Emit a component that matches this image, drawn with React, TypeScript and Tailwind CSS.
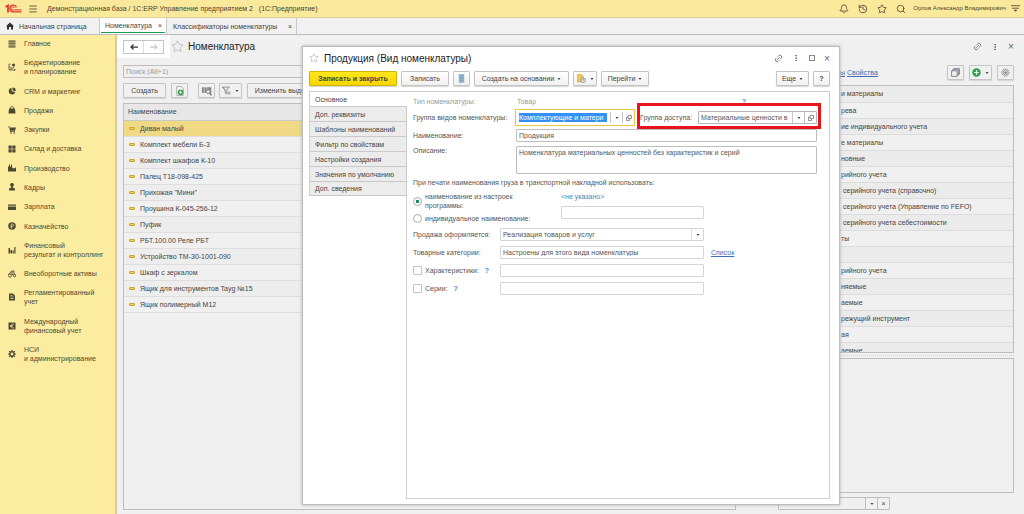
import type { ComponentProps, ReactNode } from "react";
import { clsx } from "clsx";
import { Bell, History, Link2, Menu, MoreVertical, Search, Star } from "lucide-react";

type SectionIcon =
  | "main" | "budget" | "crm" | "sales" | "purchase" | "stock" | "factory" | "staff"
  | "salary" | "treasury" | "result" | "assets" | "regulated" | "ifrs" | "admin";

const sections: { icon: SectionIcon; lines: string[] }[] = [
  { icon: "main", lines: ["Главное"] },
  { icon: "budget", lines: ["Бюджетирование", "и планирование"] },
  { icon: "crm", lines: ["CRM и маркетинг"] },
  { icon: "sales", lines: ["Продажи"] },
  { icon: "purchase", lines: ["Закупки"] },
  { icon: "stock", lines: ["Склад и доставка"] },
  { icon: "factory", lines: ["Производство"] },
  { icon: "staff", lines: ["Кадры"] },
  { icon: "salary", lines: ["Зарплата"] },
  { icon: "treasury", lines: ["Казначейство"] },
  { icon: "result", lines: ["Финансовый", "результат и контроллинг"] },
  { icon: "assets", lines: ["Внеоборотные активы"] },
  { icon: "regulated", lines: ["Регламентированный", "учет"] },
  { icon: "ifrs", lines: ["Международный", "финансовый учет"] },
  { icon: "admin", lines: ["НСИ", "и администрирование"] },
];

const items = [
  "Диван малый",
  "Комплект мебели Б-3",
  "Комплект шкафов К-10",
  "Палец Т18-098-425",
  'Прихожая "Мини"',
  "Проушина К-045-256-12",
  "Пуфик",
  "РБТ.100.00 Реле РБТ",
  "Устройство ТМ-30-1001-090",
  "Шкаф с зеркалом",
  "Ящик для инструментов Tayg №15",
  "Ящик полимерный М12",
];

const kinds = [
  "и материалы",
  "рева",
  "ие индивидуального учета",
  "е материалы",
  "новные",
  "рийного учета",
  "серийного учета (справочно)",
  "серийного учета (Управление по FEFO)",
  "серийного учета себестоимости",
  "ты",
  "",
  "рийного учета",
  "няемые",
  "аемые",
  "режущий инструмент",
  "ая",
  "аемые",
];

const dialogTabs = [
  "Основное",
  "Доп. реквизиты",
  "Шаблоны наименований",
  "Фильтр по свойствам",
  "Настройки создания",
  "Значения по умолчанию",
  "Доп. сведения",
];

const sectionShapes: Record<SectionIcon, ReactNode> = {
  main: <path d="M1 1h14v2.4H1zM1 4.9h14v2.4H1zM1 8.8h14v2.4H1zM1 12.7h14v2.4H1z" />,
  budget: (
    <>
      <path d="M2 2v12h12M2 2h3M2 8h3l3 3 5-3" fill="none" stroke="currentColor" strokeWidth="1.5" />
      <circle cx="11" cy="4" r="3.2" />
      <circle cx="6" cy="12" r="1.6" />
      <circle cx="13.5" cy="13.5" r="1.6" />
    </>
  ),
  crm: <path d="M7 2a6.6 6.6 0 1 0 7.5 8L7.5 8.6zM9 1v6.2l6.4 1.2A6.8 6.8 0 0 0 9 1z" />,
  sales: (
    <>
      <path d="M2 5h12l1 10H1z" />
      <path d="M5 7V4a3 3 0 0 1 6 0v3" fill="none" stroke="currentColor" strokeWidth="1.4" />
    </>
  ),
  purchase: (
    <>
      <path d="M0 1h3.2l.8 2h12l-2 6.5H5.6l.3 1.2H14V12H4.6L2.4 2.6H0z" />
      <circle cx="6" cy="14" r="1.6" />
      <circle cx="12.5" cy="14" r="1.6" />
    </>
  ),
  stock: <path d="M1 1h6.4v6.4H1zM8.6 1H15v6.4H8.6zM1 8.6h6.4V15H1zM8.6 8.6H15V15H8.6z" />,
  factory: <path d="M0 15V5h2V1h2v4h2V1h2v6l4 2 3-2h1v8z" />,
  staff: <path d="M8 0a3.6 3.6 0 0 1 2.2 6.5L9.5 9 14 11v4H2v-4l4.5-2-.7-2.5A3.6 3.6 0 0 1 8 0z" />,
  salary: <path d="M0 3h16v2.5H0zM0 7h16v7H0z" />,
  treasury: (
    <>
      <circle cx="8" cy="8" r="7.5" />
      <path d="M6.5 13V4h2.3a2.3 2.3 0 0 1 0 4.6H5M5 10.6h4" fill="none" stroke="#fbeb9e" strokeWidth="1.3" />
    </>
  ),
  result: <path d="M1 4h3v11H1zM5 8h3v7H5zM9 9h2.5v6H9zM12.5 2h2.5v13h-2.5z" />,
  assets: (
    <g fill="none" stroke="currentColor" strokeWidth="1.8">
      <circle cx="4" cy="11" r="3" />
      <circle cx="13" cy="11.5" r="2.3" />
      <path d="M1 8l4-2 2-4h5v6l3 1M7 9h4M8 3v5" />
    </g>
  ),
  regulated: (
    <>
      <path d="M2 1h8l4 4v10H2z" />
      <path d="M5 5h4M5 8h6M5 11h6" stroke="#fbeb9e" strokeWidth="1.3" />
    </>
  ),
  ifrs: (
    <>
      <path d="M1 1h14v14H1z" />
      <path d="M12 4.5a4 4 0 1 0 0 7M4 7h6M4 9.2h5" fill="none" stroke="#fbeb9e" strokeWidth="1.3" />
    </>
  ),
  admin: (
    <>
      <circle cx="8" cy="8" r="4.3" fill="none" stroke="currentColor" strokeWidth="3" />
      <path
        d="M8 0v3M8 13v3M0 8h3M13 8h3M2.3 2.3l2 2M11.7 11.7l2 2M2.3 13.7l2-2M11.7 4.3l2-2"
        stroke="currentColor"
        strokeWidth="2.4"
      />
    </>
  ),
};

function Logo() {
  return (
    <svg viewBox="0 0 34 18" className="h-[9px] w-[17px]" fill="none" stroke="#dd3a2c">
      <path d="M1 6l5-3v14" strokeWidth="3.6" />
      <path d="M23 6.5a6.8 6.8 0 1 0-6.5 9.3H33" strokeWidth="2.6" />
      <path d="M19 8a3 3 0 1 0-2.5 3.8H33" strokeWidth="2" />
    </svg>
  );
}

function Caret() {
  return (
    <svg viewBox="0 0 6 4" className="h-[2px] w-[4px] shrink-0" fill="#444">
      <path d="M0 0h6L3 4z" />
    </svg>
  );
}

function OpenIcon() {
  return (
    <svg viewBox="0 0 12 12" className="size-[6px]" fill="none" stroke="#666" strokeWidth="1.4">
      <path d="M4 1h7v6H4zM4 4H1v7h6V8" />
    </svg>
  );
}

function Button({ className, children, ...props }: ComponentProps<"button">) {
  return (
    <button
      type="button"
      className={clsx(
        "flex h-[15px] shrink-0 items-center justify-center rounded-[1px] border border-[#c4c4c4] shadow-[0_1px_1px_#d4d4d4]",
        className,
      )}
      {...props}
    >
      {children}
    </button>
  );
}

function TopBar() {
  return (
    <header className="flex h-[18px] shrink-0 items-center border-b border-[#ddd09a] bg-[#fae89b] pl-[5px] pr-[4px] text-[#4a4631]">
      <Logo />
      <button type="button" aria-label="Меню" className="ml-[6px]">
        <Menu className="size-[10px]" strokeWidth={2} />
      </button>
      <span className="ml-[9px] whitespace-pre">
        {"Демонстрационная база / 1С:ERP Управление предприятием 2   (1С:Предприятие)"}
      </span>
      <div className="ml-auto flex items-center gap-[9px]">
        <button type="button" aria-label="Уведомления"><Bell className="size-[10px]" /></button>
        <button type="button" aria-label="История"><History className="size-[10px]" /></button>
        <button type="button" aria-label="Избранное"><Star className="size-[10px]" /></button>
        <button type="button" aria-label="Поиск"><Search className="size-[10px]" /></button>
        <span className="-ml-[2px] text-[6px]">Орлов Александр Владимирович</span>
        <button type="button" aria-label="Настройки" className="-ml-[4px]">
          <svg viewBox="0 0 16 16" className="size-[9px]" stroke="currentColor" strokeWidth="1.5">
            <path d="M0 3h16M2 7.5h12" />
            <path d="M6 11h4l-2 2z" fill="currentColor" />
          </svg>
        </button>
      </div>
    </header>
  );
}

function WindowTabs() {
  return (
    <nav className="flex h-[17px] shrink-0 border-b border-[#bcbcbc] bg-[#f1f1f1] text-[#444]">
      <button type="button" className="flex w-[100px] items-center gap-[5px] border-r border-[#c9c9c9] pl-[6px]">
        <svg viewBox="0 0 16 16" className="size-[8px]" fill="#333">
          <path d="M8 1l8 7.5h-2V15h-4v-5H6v5H2V8.5H0z" />
        </svg>
        Начальная страница
      </button>
      <button type="button" className="w-[67px] border-r border-[#c9c9c9] bg-white px-px pb-px">
        <span className="flex h-full items-center justify-between border-b border-[#1f9d57] pl-[4px] pr-[3px] pt-px">
          Номенклатура <span>×</span>
        </span>
      </button>
      <button type="button" className="flex w-[130px] items-center justify-between border-r border-[#c9c9c9] pl-[6px] pr-[4px]">
        Классификаторы номенклатуры <span>×</span>
      </button>
    </nav>
  );
}

function Sidebar() {
  return (
    <aside className="w-[117px] shrink-0 border-r-2 border-[#d8cc95] bg-[#fcec9f] pt-[4px] text-[#4d4a33]">
      <ul className="flex h-[324px] flex-col justify-between">
        {sections.map(({ icon, lines }) => (
          <li key={icon}>
            <a href="#" className="flex items-center pl-[8px] leading-[9px]">
              <svg viewBox="0 0 16 16" className="size-[8px] shrink-0" fill="currentColor">
                {sectionShapes[icon]}
              </svg>
              <span className="ml-[8px] whitespace-nowrap">
                {lines.map((line) => (
                  <span key={line} className="block">{line}</span>
                ))}
              </span>
            </a>
          </li>
        ))}
      </ul>
    </aside>
  );
}

function ItemList() {
  return (
    <section className="flex min-w-0 flex-1 flex-col">
      <input
        type="search"
        aria-label="Поиск"
        placeholder="Поиск (Alt+1)"
        className="h-[13px] rounded-[1px] border border-[#bdbdbd] px-[2px] placeholder:text-[#999]"
      />
      <div className="mt-[5px] flex">
        <Button className="w-[43px]">Создать</Button>
        <Button aria-label="Скопировать" className="ml-[5px] w-[17px]">
          <svg viewBox="0 0 16 16" className="size-[10px]" fill="none">
            <path d="M3 1h7l3 3v11H3z" fill="#fff" stroke="#777" />
            <circle cx="9" cy="10" r="4.5" fill="#2ba14b" />
            <path d="M9 7.5v5M6.5 10h5" stroke="#fff" strokeWidth="1.5" />
          </svg>
        </Button>
        <Button aria-label="Штрихкод" className="ml-[10px] w-[17px]">
          <svg viewBox="0 0 16 16" className="size-[10px]" fill="none" stroke="#555">
            <path d="M1 2v9M3 2v9M5.5 2v9M8 2v5M10 2v4M12 2v4M14 2v9" strokeWidth="1.3" />
            <circle cx="10" cy="9" r="3" />
            <path d="M12 11l3 4" strokeWidth="1.8" />
          </svg>
        </Button>
        <Button aria-label="Отбор" className="ml-[4px] w-[23px] gap-[4px]">
          <svg viewBox="0 0 16 16" className="size-[9px]" fill="none" stroke="#777" strokeWidth="1.4">
            <path d="M1 2h12L8.5 7v7l-3-2V7zM1 2l4.500 5M10 11h5M10 14h5" />
          </svg>
          <Caret />
        </Button>
        <Button className="ml-[5px] w-[90px]">Изменить выделенные</Button>
      </div>
      <div className="mt-[5px] flex-1 overflow-hidden border border-[#bdbdbd]">
        <table className="w-full border-collapse">
          <thead>
            <tr className="h-[16px] border-b border-[#c9c9c9] bg-[#e7e7e7]">
              <th className="p-0 pl-[4px] text-left font-normal">Наименование</th>
            </tr>
          </thead>
          <tbody>
            {items.map((name, i) => (
              <tr
                key={name}
                className={clsx("h-[16px] border-b border-[#dedede]", i === 0 ? "bg-[#efd985]" : i % 2 === 0 && "bg-[#ededed]")}
              >
                <td className="p-0 pl-[5px]">
                  <span className="flex items-center gap-[5px]">
                    <span className="h-[3px] w-[6px] rounded-[1px] border border-[#cfa52a] bg-[#eacb62]" />
                    {name}
                  </span>
                </td>
              </tr>
            ))}
          </tbody>
        </table>
      </div>
    </section>
  );
}

function KindsPanel() {
  return (
    <section className="flex w-[273px] shrink-0 flex-col">
      <div className="flex h-[15px] items-center justify-end">
        <span className="mr-auto flex gap-[2px] pl-[99px] text-[#3d6eb0]">
          <a href="#" className="underline">ы</a>
          <a href="#" className="underline">Свойства</a>
        </span>
        <Button aria-label="Копировать" className="w-[17px]">
          <svg viewBox="0 0 16 16" className="size-[9px]" fill="none" stroke="#667" strokeWidth="1.3">
            <path d="M1 5h10v10H1zM3 5V3h10v10h-2M5 3V1h10v10h-2" />
          </svg>
        </Button>
        <Button aria-label="Добавить" className="ml-[5px] w-[23px] gap-[4px]">
          <svg viewBox="0 0 16 16" className="size-[9px]">
            <circle cx="8" cy="8" r="7.5" fill="#2ba14b" />
            <path d="M8 4v8M4 8h8" stroke="#fff" strokeWidth="2" />
          </svg>
          <Caret />
        </Button>
        <Button aria-label="Настройка" className="ml-[5px] w-[17px]">
          <svg viewBox="0 0 16 16" className="size-[9px]" fill="none" stroke="#777" strokeWidth="1.3">
            <circle cx="8" cy="8" r="6.5" strokeDasharray="2.5 1" />
            <circle cx="8" cy="8" r="4.3" />
            <circle cx="8" cy="8" r="1.5" fill="#777" />
          </svg>
        </Button>
      </div>
      <div className="mt-[5px] flex-2 basis-0 overflow-hidden border border-[#bdbdbd]">
        <table className="w-full border-collapse">
          <tbody>
            {kinds.map((kind, i) => (
              <tr key={i} className={clsx("h-[16px] border-b border-[#dcdcdc]", i % 2 === 0 && "bg-[#ebebeb]")}>
                <td className={clsx("p-0", kind.startsWith("серийного") ? "pl-[101px]" : "pl-[99px]")}>{kind}</td>
              </tr>
            ))}
          </tbody>
        </table>
      </div>
      <div className="my-[2px] border-t border-dotted border-[#cfcfcf]" />
      <div className="flex-1 basis-0 border border-[#bdbdbd]" />
      <div className="ml-[37px] mt-[4px] flex h-[13px] w-[112px] rounded-[1px] border border-[#bdbdbd]">
        <input type="text" aria-label="Отбор" className="min-w-0 flex-1" />
        <button type="button" aria-label="Выбрать" className="flex w-[12px] items-center justify-center border-l border-[#bdbdbd]">
          <Caret />
        </button>
        <button type="button" aria-label="Очистить" className="flex w-[12px] items-center justify-center border-l border-[#bdbdbd]">
          ×
        </button>
      </div>
    </section>
  );
}

function Workspace() {
  return (
    <main className="flex min-w-0 flex-1 flex-col pb-[4px] pr-[10px] text-[#444]">
      <div className="flex h-[23px] items-center">
        <div className="flex h-full w-[53px] items-center bg-white pl-[6px]">
          <div className="flex h-[14px] w-[41px] border border-[#c4c4c4]">
            <button type="button" aria-label="Назад" className="flex flex-1 items-center justify-center">
              <svg viewBox="0 0 16 12" className="h-[6px] w-[8px]" fill="none" stroke="#333" strokeWidth="2.5">
                <path d="M16 6H2M7 1L2 6l5 5" />
              </svg>
            </button>
            <button type="button" aria-label="Вперед" className="flex flex-1 items-center justify-center border-l border-[#dedede]">
              <svg viewBox="0 0 16 12" className="h-[6px] w-[8px]" fill="none" stroke="#b5b5b5" strokeWidth="2">
                <path d="M0 6h14M9 1l5 5-5 5" />
              </svg>
            </button>
          </div>
        </div>
        <Star className="ml-[1px] size-[13px] text-[#b5b5b5]" strokeWidth={1.5} />
        <h1 className="ml-[4px] text-[10px] text-[#222]">Номенклатура</h1>
        <div className="ml-auto flex items-center gap-[9px] text-[#666]">
          <button type="button" aria-label="Ссылка"><Link2 className="size-[9px] -rotate-45" /></button>
          <button type="button" aria-label="Еще"><MoreVertical className="size-[8px]" strokeWidth={3} /></button>
          <button type="button" aria-label="Закрыть" className="w-[6px] text-[10px]">×</button>
        </div>
      </div>
      <div className="flex min-h-0 flex-1 gap-[5px] pl-[6px] pt-[7px]">
        <ItemList />
        <KindsPanel />
      </div>
    </main>
  );
}

function ComboField({ id, value, selected, muted }: { id: string; value: string; selected?: boolean; muted?: boolean }) {
  const cell = clsx(
    "flex w-[12px] shrink-0 items-center justify-center border-l",
    selected ? "h-[11px]" : "h-full",
    muted ? "border-[#dedede]" : "border-[#c4c4c4]",
  );
  return (
    <div
      className={clsx(
        "flex min-w-0 flex-1 items-center rounded-[1px] border bg-white",
        selected ? "h-[17px] border-[#ecc84a] shadow-[0_0_1px_#ecc84a]" : "h-[13px]",
        !selected && (muted ? "border-[#d5d5d5]" : "border-[#b5b5b5]"),
      )}
    >
      <input
        id={id}
        type="text"
        defaultValue={value}
        className={clsx("h-[9px] min-w-0 flex-1", selected ? "mx-[3px] bg-[#3391f5] text-white" : "ml-[2px]")}
      />
      <button type="button" aria-label="Выбрать" className={cell}>
        <Caret />
      </button>
      {!muted && (
        <button type="button" aria-label="Открыть" className={cell}>
          <OpenIcon />
        </button>
      )}
    </div>
  );
}

const lightInput = "h-[13px] w-[204px] rounded-[1px] border border-[#d5d5d5] bg-white px-[2px]";

function KindForm() {
  return (
    <form className="flex min-w-0 flex-1 flex-col border border-l-0 border-[#cfcfcf] pl-[6px] pr-[12px] text-[#555]">
      <div className="mt-[5px] flex h-[9px] items-center text-[#999]">
        <span className="w-[104px]">Тип номенклатуры:</span>
        <span className="flex-1">Товар</span>
        <button type="button" className="mr-[71px] font-bold text-[#3b8fc9]">?</button>
      </div>

      <div className="mt-[5px] flex h-[13px] items-center">
        <label htmlFor="kind-group" className="w-[102px] shrink-0 whitespace-nowrap">Группа видов номенклатуры:</label>
        <div className="flex min-w-0 flex-1">
          <ComboField id="kind-group" value="Комплектующие и матери" selected />
        </div>
        {/* highlighted pair: the frame is taller than the row on its upper side */}
        <div className="relative -mb-[5px] -mr-[4px] -mt-[8px] ml-[2px] flex w-[184px] shrink-0 items-center border-[3px] border-[#e8131b] pb-[2px] pr-px pt-[5px]">
          <label htmlFor="access-group" className="w-[58px] shrink-0">Группа доступа:</label>
          <ComboField id="access-group" value="Материальные ценности в" />
        </div>
      </div>

      <div className="mt-[5px] flex items-center">
        <label htmlFor="name" className="w-[103px] shrink-0">Наименование:</label>
        <input id="name" type="text" defaultValue="Продукция" className="h-[13px] min-w-0 flex-1 rounded-[1px] border border-[#bdbdbd] px-[2px]" />
      </div>

      <div className="mt-[4px] flex">
        <label htmlFor="description" className="w-[103px] shrink-0">Описание:</label>
        <textarea
          id="description"
          defaultValue="Номенклатура материальных ценностей без характеристик и серий"
          className="h-[28px] min-w-0 flex-1 resize-none rounded-[1px] border border-[#bdbdbd] px-[2px] py-[1px]"
        />
      </div>

      <fieldset className="mt-[4px]">
        <legend>При печати наименования груза в транспортной накладной использовать:</legend>
        <div className="mt-[5px] flex">
          <div className="w-[148px]">
            <label className="flex items-center gap-[3px]">
              <input
                type="radio"
                name="cargo"
                defaultChecked
                className="size-[9px] appearance-none rounded-full border border-[#aaa] checked:bg-[radial-gradient(#17905a_0_30%,white_40%)]"
              />
              <span>наименование из настроек<br />программы:</span>
            </label>
            <label className="mt-[4px] flex items-center gap-[3px]">
              <input type="radio" name="cargo" className="size-[9px] appearance-none rounded-full border border-[#aaa]" />
              индивидуальное наименование:
            </label>
          </div>
          <div className="flex flex-col">
            <a href="#" className="text-[#4a7ebb]">&lt;не указано&gt;</a>
            <input type="text" aria-label="Индивидуальное наименование" className="mt-[5px] h-[13px] w-[143px] rounded-[1px] border border-[#d5d5d5]" />
          </div>
        </div>
      </fieldset>

      <div className="mt-[5px] flex flex-col gap-[5px]">
        <div className="flex items-center">
          <label htmlFor="sale" className="w-[87px]">Продажа оформляется:</label>
          <div className="flex w-[204px]">
            <ComboField id="sale" value="Реализация товаров и услуг" muted />
          </div>
        </div>
        <div className="flex items-center">
          <label htmlFor="categories" className="w-[87px]">Товарные категории:</label>
          <input id="categories" type="text" defaultValue="Настроены для этого вида номенклатуры" className={lightInput} />
          <a href="#" className="ml-[7px] text-[#3a6fc0] underline">Список</a>
        </div>
        {["Характеристики:", "Серии:"].map((text) => (
          <div key={text} className="flex items-center">
            <div className="flex w-[87px] items-center">
              <label className="flex items-center gap-[3px]">
                <input type="checkbox" className="size-[9px] appearance-none rounded-[1px] border border-[#c4c4c4]" />
                {text}
              </label>
              <button type="button" className="ml-[6px] font-bold text-[#3b8fc9]">?</button>
            </div>
            <input type="text" aria-label={text} className={lightInput} />
          </div>
        ))}
      </div>
    </form>
  );
}

function KindDialog() {
  const light = "bg-gradient-to-b from-white to-[#f0f0f0]";
  return (
    <div
      role="dialog"
      aria-labelledby="dialog-title"
      className="absolute bottom-[9px] left-[302px] right-[184px] top-[46px] flex flex-col border border-[#bdbdbd] bg-white pb-[5px] pl-[6px] pr-[9px] text-[#444] shadow-[0_0_3px_#aaa]"
    >
      <div className="flex h-[24px] shrink-0 items-center pb-[2px]">
        <Star className="size-[10px] text-[#aaa]" strokeWidth={1.5} />
        <h2 id="dialog-title" className="ml-[5px] text-[10px] text-[#222]">Продукция (Вид номенклатуры)</h2>
        <div className="ml-auto flex items-center gap-[9px] text-[#666]">
          <button type="button" aria-label="Ссылка"><Link2 className="size-[9px] -rotate-45" /></button>
          <button type="button" aria-label="Меню"><MoreVertical className="size-[8px]" strokeWidth={3} /></button>
          <button type="button" aria-label="Развернуть" className="size-[6px] border border-[#888]" />
          <button type="button" aria-label="Закрыть" className="w-[6px] text-[10px]">×</button>
        </div>
      </div>
      <div className="flex shrink-0 gap-[4px]">
        <Button className="w-[88px] border-[#d0b400] bg-gradient-to-b from-[#ffe71a] to-[#f7d600] font-bold">Записать и закрыть</Button>
        <Button className={clsx("w-[48px]", light)}>Записать</Button>
        <Button aria-label="Список" className={clsx("w-[17px]", light)}>
          <svg viewBox="0 0 12 16" className="h-[9px] w-[7px]">
            <path d="M1 0h10v16H1z" fill="#9fc0d3" />
            <path d="M2 3h8M2 6h8M2 9h8M2 12h8" stroke="#54829e" />
          </svg>
        </Button>
        <Button className={clsx("w-[95px] gap-[3px]", light)}>Создать на основании <Caret /></Button>
        <Button aria-label="Напоминание" className={clsx("w-[24px] gap-[4px]", light)}>
          <svg viewBox="0 0 16 16" className="size-[9px]">
            <path d="M1 1h7l3 3v10H1z" fill="#f0c75a" stroke="#c59a35" />
            <circle cx="11" cy="11" r="4" fill="#eef3f8" stroke="#557" />
            <path d="M11 8.5V11h2" fill="none" stroke="#557" />
          </svg>
          <Caret />
        </Button>
        <Button className={clsx("w-[48px] gap-[3px]", light)}>Перейти <Caret /></Button>
        <Button className={clsx("ml-auto w-[33px] gap-[3px]", light)}>Еще <Caret /></Button>
        <Button aria-label="Справка" className={clsx("w-[17px] font-bold", light)}>?</Button>
      </div>
      <div className="mt-[5px] flex min-h-0 flex-1">
        <div className="flex w-[98px] shrink-0 flex-col">
          <div role="tablist" className="flex flex-col border-l border-[#cfcfcf]">
            {dialogTabs.map((tab, i) => (
              <button
                key={tab}
                type="button"
                role="tab"
                aria-selected={i === 0}
                className={clsx(
                  "h-[15px] border-t border-[#c9c9c9] pl-[5px] text-left last:border-b",
                  i > 0 && "border-r bg-[#ececec]",
                )}
              >
                {tab}
              </button>
            ))}
          </div>
          <div className="flex-1 border-r border-[#cfcfcf]" />
        </div>
        <KindForm />
      </div>
    </div>
  );
}

export default function App() {
  return (
    <div className="relative flex h-screen flex-col overflow-hidden bg-[#f0f0f0] font-['Liberation_Sans',Arial,sans-serif] text-[7px] leading-[9px]">
      <TopBar />
      <WindowTabs />
      <div className="flex min-h-0 flex-1">
        <Sidebar />
        <Workspace />
      </div>
      <KindDialog />
    </div>
  );
}
